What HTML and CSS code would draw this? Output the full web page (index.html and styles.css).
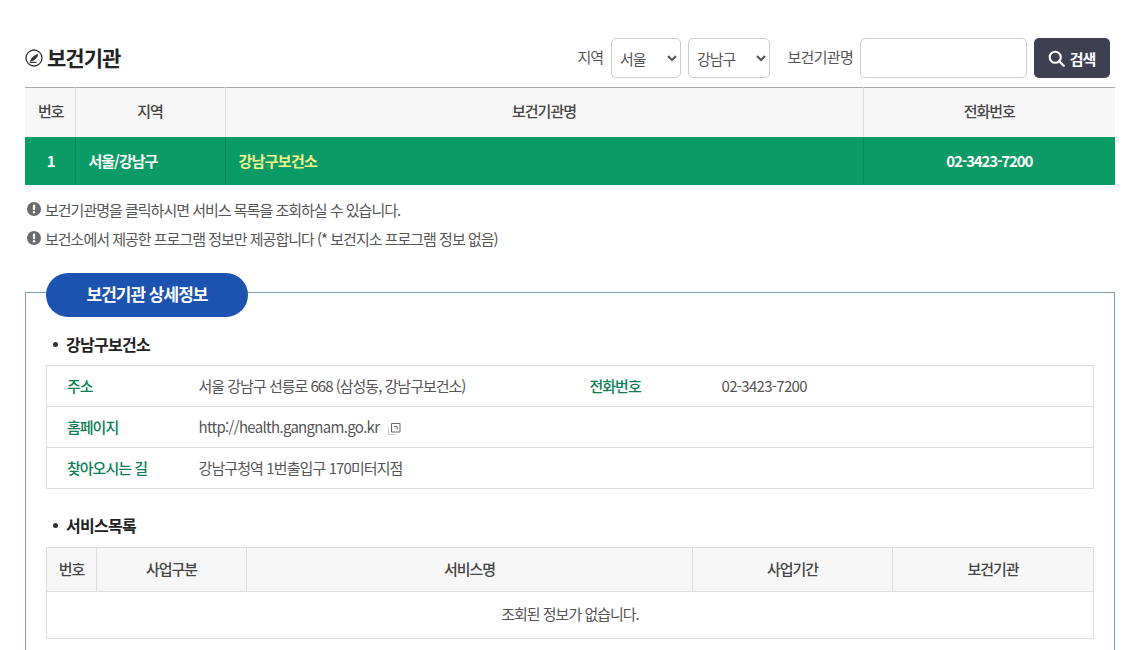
FILE: index.html
```html
<!DOCTYPE html>
<html lang="ko">
<head>
<meta charset="utf-8">
<title>보건기관</title>
<link rel="stylesheet" href="styles.css">
</head>
<body>
<main class="page">
  <header class="top">
    <h1 class="title">
      <svg class="title-icon" viewBox="0 0 18 18" width="18" height="18"><circle cx="9" cy="9" r="8" fill="none" stroke="#333" stroke-width="1.3"/><path d="M4.6 13.4h7" stroke="#333" stroke-width="1.2" fill="none"/><path d="M5 12.8c.6-3.2 3.2-6.4 8.2-8-.6 4.4-3.6 7.2-8.2 8z" fill="#333"/></svg>
      <span class="title-text">보건기관</span>
    </h1>
    <form class="search">
      <label class="lbl lbl-area">지역</label>
      <select class="sel sel-a"><option>서울</option></select>
      <select class="sel sel-b"><option>강남구</option></select>
      <label class="lbl lbl-name">보건기관명</label>
      <input class="inp" type="text">
      <button class="btn" type="button">
        <svg viewBox="0 0 16 16" width="17" height="17"><circle cx="6.8" cy="6.8" r="5.2" fill="none" stroke="#fff" stroke-width="2"/><path d="M10.6 10.6l4.2 4.2" stroke="#fff" stroke-width="2.2" stroke-linecap="round"/></svg>
        검색
      </button>
    </form>
  </header>

  <table class="list">
    <colgroup><col class="c1"><col class="c2"><col class="c3"><col class="c4"></colgroup>
    <thead><tr><th class="no">번호</th><th>지역</th><th>보건기관명</th><th>전화번호</th></tr></thead>
    <tbody><tr><td class="no">1</td><td class="left">서울/강남구</td><td class="left name">강남구보건소</td><td class="phone">02-3423-7200</td></tr></tbody>
  </table>

  <ul class="notes">
    <li><svg viewBox="0 0 14 14" width="14" height="14"><circle cx="7" cy="7" r="7" fill="#6b6b6b"/><rect x="5.9" y="2.6" width="2.2" height="5.6" rx=".9" fill="#fff"/><circle cx="7" cy="10.3" r="1.2" fill="#fff"/></svg>보건기관명을 클릭하시면 서비스 목록을 조회하실 수 있습니다.</li>
    <li><svg viewBox="0 0 14 14" width="14" height="14"><circle cx="7" cy="7" r="7" fill="#6b6b6b"/><rect x="5.9" y="2.6" width="2.2" height="5.6" rx=".9" fill="#fff"/><circle cx="7" cy="10.3" r="1.2" fill="#fff"/></svg>보건소에서 제공한 프로그램 정보만 제공합니다 (* 보건지소 프로그램 정보 없음)</li>
  </ul>

  <section class="box">
    <h2 class="pill">보건기관 상세정보</h2>
    <h3 class="sub sub-first">강남구보건소</h3>
    <table class="info">
      <colgroup><col class="i1"><col class="i2"><col class="i3"><col></colgroup>
      <tr><th>주소</th><td>서울 강남구 선릉로 668 (삼성동, 강남구보건소)</td><th>전화번호</th><td class="latin">02-3423-7200</td></tr>
      <tr><th>홈페이지</th><td colspan="3" class="latin">http://health.gangnam.go.kr <svg class="ext" viewBox="0 0 14 14" width="14" height="14"><path d="M4.5 1.5h8.5v8.5H4.5z" fill="none" stroke="#666"/><path d="M7 4.5h3.2v3" fill="none" stroke="#666"/><path d="M1.5 4.5v8h8" fill="none" stroke="#ccc"/></svg></td></tr>
      <tr><th>찾아오시는 길</th><td colspan="3" class="loose">강남구청역 1번출입구 170미터지점</td></tr>
    </table>
    <h3 class="sub sub-second">서비스목록</h3>
    <table class="svc">
      <colgroup><col class="s1"><col class="s2"><col class="s3"><col class="s4"><col></colgroup>
      <thead><tr><th>번호</th><th>사업구분</th><th>서비스명</th><th>사업기간</th><th>보건기관</th></tr></thead>
      <tbody><tr><td colspan="5">조회된 정보가 없습니다.</td></tr></tbody>
    </table>
  </section>
</main>
</body>
</html>
```
FILE: styles.css
```css
html, body { margin: 0; padding: 0; background: #fff; height: 650px; overflow: hidden; }
body { font-family: "Noto Sans CJK KR", "Noto Sans", sans-serif; color: #444; font-size: 15px; letter-spacing: -1px; }
.page { width: 1090px; margin-left: 25px; padding-top: 38px; }

.top { display: flex; justify-content: space-between; align-items: center; height: 40px; margin-bottom: 9px; }
.title { display: flex; align-items: center; gap: 4px; margin: 0; font-size: 21px; font-weight: 700; color: #222; letter-spacing: -1px; line-height: 38px; }
.title-text { padding-bottom: 3px; }
.search { display: flex; align-items: center; margin-right: 5px; }
.lbl { color: #555; margin-right: 7px; line-height: 38px; padding-bottom: 2px; }
.lbl-area { margin-right: 8px; }
.lbl-name { margin-left: 17.5px; letter-spacing: -0.7px; }
.sel, .inp { height: 40px; box-sizing: border-box; border: 1px solid #ccc; border-radius: 5px; background-color: #fff; font: inherit; color: #555; letter-spacing: -1px; }
.sel { padding-left: 4px; margin-right: 7px; }
.sel-a { width: 70px; }
.sel-b { width: 82px; margin-right: 0; }
.inp { width: 167px; margin-right: 7px; }
.btn { display: flex; align-items: center; justify-content: center; gap: 5px; width: 76px; height: 40px; border: 0; border-radius: 5px; background: #3f3f52; color: #fff; font: inherit; font-weight: 700; letter-spacing: -1px; padding: 0 1px 0 0; }

table { border-collapse: collapse; table-layout: fixed; }
.list { width: 1090px; border-top: 1px solid #aaa; }
.c1 { width: 50px; } .c2 { width: 150px; } .c3 { width: 638px; }
.list th { height: 49px; padding: 0 0 3px; box-sizing: border-box; background: #f7f7f7; font-weight: 500; color: #444; border-left: 1px solid #ddd; }
.list th:first-child { border-left: 0; }
.list td { height: 48px; padding: 0 0 1px; box-sizing: border-box; background: #0b9b67; color: #fff; font-weight: 700; text-align: center; border-left: 1px solid #0a8a5c; }
.list td:first-child { border-left: 0; }
.list .no { padding-left: 2px; }
.list td.left { text-align: left; padding-left: 13px; }
.list td.name { color: #f2f58c; letter-spacing: -0.7px; }
.list td.phone { letter-spacing: -1.15px; }

.notes { list-style: none; margin: 10px 0 0; padding: 0 0 0 2px; color: #555; }
.notes li { display: flex; align-items: center; gap: 4px; height: 29px; }

.box { margin-top: 39px; height: 358px; box-sizing: border-box; border: 1px solid #7ba3b3; border-bottom: 0; padding: 0 20px; }
.pill { width: 202px; height: 44px; margin: -20px 0 0; border-radius: 22px; background: #1c52b0; color: #fff; font-size: 17px; font-weight: 700; letter-spacing: -1px; display: flex; align-items: center; justify-content: center; padding-bottom: 2px; box-sizing: border-box; }
.sub { margin: 0; font-size: 16px; font-weight: 700; color: #222; display: flex; align-items: center; height: 22px; padding-left: 20px; position: relative; letter-spacing: -0.7px; }
.sub::before { content: ""; position: absolute; left: 7px; top: 9px; width: 5px; height: 5px; border-radius: 50%; background: #333; }
.sub-first { margin-top: 16px; margin-bottom: 10px; }
.sub-second { margin-top: 25px; margin-bottom: 11px; }

.info { width: 1048px; border: 1px solid #ddd; }
.i1 { width: 152px; } .i2 { width: 371px; } .i3 { width: 152px; }
.info tr { height: 41px; border-top: 1px solid #ddd; }
.info th { text-align: left; padding: 0 0 0 20px; font-weight: 500; color: #0c7d55; }
.info td { padding: 0; color: #555; }
.info td.latin { letter-spacing: -0.7px; }
.info td.loose { letter-spacing: -0.9px; }
.ext { vertical-align: -3px; margin-left: 4px; }

.svc { width: 1048px; border: 1px solid #ddd; }
.s1 { width: 50px; } .s2 { width: 150px; } .s3 { width: 446px; } .s4 { width: 200px; }
.svc th { height: 44px; padding: 0 0 1px; box-sizing: border-box; background: #f7f7f7; font-weight: 500; color: #444; border-left: 1px solid #ddd; border-bottom: 1px solid #ddd; }
.svc td { height: 47px; padding: 0 0 2px; box-sizing: border-box; text-align: center; color: #555; }
```
